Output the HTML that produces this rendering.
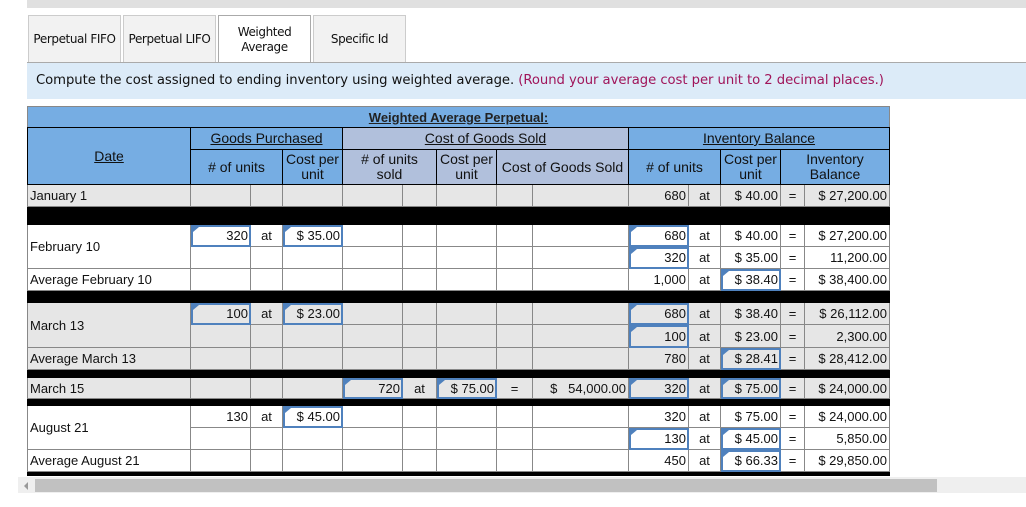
<!DOCTYPE html>
<html><head><meta charset="utf-8"><style>
*{margin:0;padding:0;box-sizing:border-box}
body{width:1026px;height:507px;background:#fff;position:relative;overflow:hidden;font-family:"Liberation Sans",Arial,sans-serif}
.topbar{position:absolute;left:27px;top:0;width:999px;height:8px;background:#e0e0e0}
.tab{position:absolute;top:15px;height:47px;border:1px solid #ccc;border-bottom:none;background:#f2f2f2;font-family:"DejaVu Sans",Verdana,sans-serif;font-size:12px;color:#111;display:flex;align-items:center;justify-content:center;text-align:center;line-height:15px;letter-spacing:-0.4px}
.tab.act{background:#fff;border-color:#aaa;height:48px}
.instr{position:absolute;left:27px;top:62px;width:999px;height:37px;background:#dcebf8;border-top:1px solid #aaa;font-family:"DejaVu Sans",Verdana,sans-serif;font-size:13.2px;color:#111;padding:10px 0 0 9px;letter-spacing:-0.05px}
.instr span{color:#a0155a}
table{position:absolute;left:27px;top:106px;border-collapse:collapse;table-layout:fixed;width:862px;font-size:13px;color:#111;font-family:"Liberation Sans",Arial,sans-serif}
td{border:1px solid #888;padding:0 2px;white-space:nowrap;overflow:hidden;font-size:13px}
.h td{background:#76ade3;text-align:center;border-color:#000;line-height:15px;font-size:14px}
.h td.c{background:#b1c0dc}
.u{text-decoration:underline}
.g td{background:#e6e6e6}
.b td{background:#000;border-color:#000;padding:0}
.r{text-align:right}
.ctr{text-align:center}
.L{border-left:1px solid #000 !important}
.in{position:relative;outline:2px solid #4f81bd;outline-offset:-2px}
.in::before{content:"";position:absolute;left:2px;top:2px;border-left:6px solid #4f81bd;border-bottom:5px solid transparent}
.tot{border-top:1px solid #000 !important}
.sb{position:absolute;left:18px;top:477px;width:1008px;height:16px;background:#efefef}
.th{position:absolute;left:35px;top:479px;width:902px;height:13px;background:#c1c1c1}
.ar{position:absolute;left:24px;top:482px;border-right:4px solid #999;border-top:4px solid transparent;border-bottom:4px solid transparent}
</style></head><body>
<div class="topbar"></div>
<div class="tab" style="left:28px;width:93px">Perpetual FIFO</div>
<div class="tab" style="left:123px;width:93px">Perpetual LIFO</div>
<div class="tab act" style="left:218px;width:93px">Weighted<br>Average</div>
<div class="tab" style="left:313px;width:93px">Specific Id</div>
<div class="instr">Compute the cost assigned to ending inventory using weighted average. <span>(Round your average cost per unit to 2 decimal places.)</span></div>
<table>
<colgroup><col style="width:163px"><col style="width:60px"><col style="width:32px"><col style="width:60px"><col style="width:60px"><col style="width:34px"><col style="width:60px"><col style="width:36px"><col style="width:96px"><col style="width:60px"><col style="width:32px"><col style="width:60px"><col style="width:24px"><col style="width:85px"></colgroup>
<tr class="h" style="height:21px"><td colspan="14" style="border-color:#888 #888 #000 #888;font-size:13px"><b class="u" style="color:#222">Weighted Average Perpetual:</b></td></tr>
<tr class="h" style="height:22px"><td rowspan="2"><span class="u">Date</span></td><td colspan="3"><span class="u">Goods Purchased</span></td><td colspan="5" class="c"><span class="u">Cost of Goods Sold</span></td><td colspan="5"><span class="u">Inventory Balance</span></td></tr>
<tr class="h" style="height:35px"><td colspan="2" style="border-top-color:#888">#&nbsp;of units</td><td style="border-top-color:#888">Cost per<br>unit</td><td colspan="2" class="c" style="border-top-color:#888">#&nbsp;of units<br>sold</td><td class="c" style="border-top-color:#888">Cost per<br>unit</td><td colspan="2" class="c" style="border-top-color:#888">Cost of Goods Sold</td><td colspan="2" style="border-top-color:#888">#&nbsp;of units</td><td style="border-top-color:#888">Cost per<br>unit</td><td colspan="2" style="border-top-color:#888">Inventory<br>Balance</td></tr>
<tr class="g" style="height:22px"><td>January 1</td><td class="L"></td><td></td><td></td><td class="L"></td><td></td><td></td><td></td><td></td><td class="r L">680</td><td class="ctr">at</td><td class="r">$ 40.00</td><td class="ctr">=</td><td class="r">$ 27,200.00</td></tr>
<tr class="b" style="height:18px"><td colspan="14"></td></tr>
<tr style="height:22px"><td rowspan="2">February 10</td><td class="r in L">320</td><td class="ctr">at</td><td class="r in">$ 35.00</td><td class="L"></td><td></td><td></td><td></td><td></td><td class="r in L">680</td><td class="ctr">at</td><td class="r">$ 40.00</td><td class="ctr">=</td><td class="r">$ 27,200.00</td></tr>
<tr style="height:22px"><td class="L"></td><td></td><td></td><td class="L"></td><td></td><td></td><td></td><td></td><td class="r in L">320</td><td class="ctr">at</td><td class="r">$ 35.00</td><td class="ctr">=</td><td class="r">11,200.00</td></tr>
<tr style="height:22px"><td>Average February 10</td><td class="L"></td><td></td><td></td><td class="L"></td><td></td><td></td><td></td><td></td><td class="r tot L">1,000</td><td class="ctr">at</td><td class="r in">$ 38.40</td><td class="ctr">=</td><td class="r tot">$ 38,400.00</td></tr>
<tr class="b" style="height:12px"><td colspan="14"></td></tr>
<tr class="g" style="height:22px"><td rowspan="2">March 13</td><td class="r in L">100</td><td class="ctr">at</td><td class="r in">$ 23.00</td><td class="L"></td><td></td><td></td><td></td><td></td><td class="r in L">680</td><td class="ctr">at</td><td class="r">$ 38.40</td><td class="ctr">=</td><td class="r">$ 26,112.00</td></tr>
<tr class="g" style="height:23px"><td class="L"></td><td></td><td></td><td class="L"></td><td></td><td></td><td></td><td></td><td class="r in L">100</td><td class="ctr">at</td><td class="r">$ 23.00</td><td class="ctr">=</td><td class="r">2,300.00</td></tr>
<tr class="g" style="height:22px"><td>Average March 13</td><td class="L"></td><td></td><td></td><td class="L"></td><td></td><td></td><td></td><td></td><td class="r tot L">780</td><td class="ctr">at</td><td class="r in">$ 28.41</td><td class="ctr">=</td><td class="r tot">$ 28,412.00</td></tr>
<tr class="b" style="height:8px"><td colspan="14"></td></tr>
<tr class="g" style="height:21px"><td>March 15</td><td class="L"></td><td></td><td></td><td class="r in L">720</td><td class="ctr">at</td><td class="r in">$ 75.00</td><td class="ctr">=</td><td class="r">$&nbsp;&nbsp;&nbsp;54,000.00</td><td class="r in L">320</td><td class="ctr">at</td><td class="r in">$ 75.00</td><td class="ctr">=</td><td class="r">$ 24,000.00</td></tr>
<tr class="b" style="height:7px"><td colspan="14"></td></tr>
<tr style="height:22px"><td rowspan="2">August 21</td><td class="r L">130</td><td class="ctr">at</td><td class="r in">$ 45.00</td><td class="L"></td><td></td><td></td><td></td><td></td><td class="r L">320</td><td class="ctr">at</td><td class="r">$ 75.00</td><td class="ctr">=</td><td class="r">$ 24,000.00</td></tr>
<tr style="height:22px"><td class="L"></td><td></td><td></td><td class="L"></td><td></td><td></td><td></td><td></td><td class="r in L">130</td><td class="ctr">at</td><td class="r in">$ 45.00</td><td class="ctr">=</td><td class="r">5,850.00</td></tr>
<tr style="height:22px"><td>Average August 21</td><td class="L"></td><td></td><td></td><td class="L"></td><td></td><td></td><td></td><td></td><td class="r tot L">450</td><td class="ctr">at</td><td class="r in">$ 66.33</td><td class="ctr">=</td><td class="r tot">$ 29,850.00</td></tr>
<tr class="b" style="height:4px"><td colspan="14"></td></tr>
</table>
<div class="sb"></div><div class="th"></div><div class="ar"></div>
</body></html>
